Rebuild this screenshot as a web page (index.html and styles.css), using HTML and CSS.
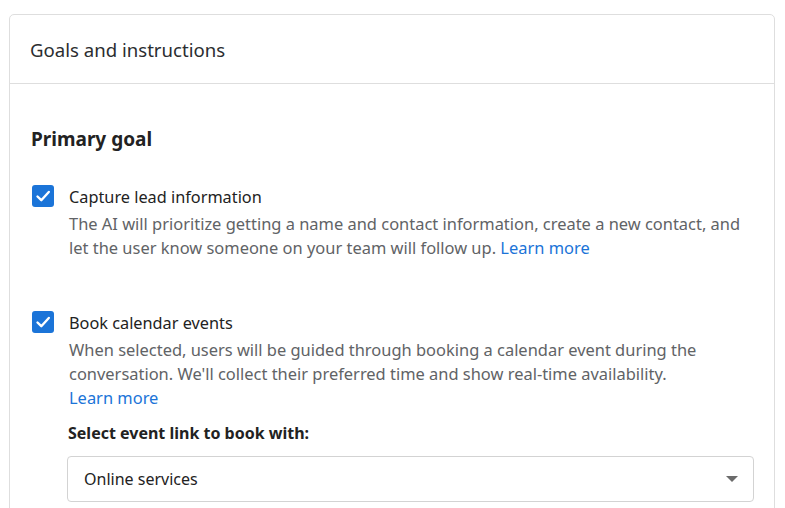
FILE: index.html
```html
<!DOCTYPE html>
<html>
<head>
<meta charset="utf-8">
<link rel="stylesheet" href="styles.css">
</head>
<body>
<div class="card">
  <div class="card-header">Goals and instructions</div>
  <div class="card-body">
    <h2 class="section-title">Primary goal</h2>
    <div class="option">
      <span class="checkbox"><svg viewBox="0 0 22 22" width="22" height="22"><path d="M5.5 11.5 L9.3 15.2 L16.8 7" fill="none" stroke="#fff" stroke-width="2.4" stroke-linecap="round" stroke-linejoin="round"/></svg></span>
      <div class="option-text">
        <div class="option-label">Capture lead information</div>
        <p class="option-desc">The AI will prioritize getting a name and contact information, create a new contact, and let the user know someone on your team will follow up. <a class="link" href="#">Learn more</a></p>
      </div>
    </div>
    <div class="option option-second">
      <span class="checkbox"><svg viewBox="0 0 22 22" width="22" height="22"><path d="M5.5 11.5 L9.3 15.2 L16.8 7" fill="none" stroke="#fff" stroke-width="2.4" stroke-linecap="round" stroke-linejoin="round"/></svg></span>
      <div class="option-text">
        <div class="option-label">Book calendar events</div>
        <p class="option-desc">When selected, users will be guided through booking a calendar event during the conversation. We'll collect their preferred time and show real-time availability.<br><a class="link" href="#">Learn more</a></p>
      </div>
    </div>
    <div class="select-group">
      <div class="select-label">Select event link to book with:</div>
      <div class="select">
        <span class="select-value">Online services</span>
        <span class="caret"></span>
      </div>
    </div>
  </div>
</div>
</body>
</html>
```
FILE: styles.css
```css
html, body {
  margin: 0;
  padding: 0;
  background: #ffffff;
}
body {
  padding: 14px 10px 0 9px;
  font-family: "Noto Sans", "Open Sans", sans-serif;
  color: #2e3033;
  height: 508px;
  box-sizing: border-box;
  overflow: hidden;
}
.card {
  border: 1px solid #dedede;
  border-radius: 5px;
  height: 600px;
  box-sizing: border-box;
}
.card-header {
  height: 68px;
  display: flex;
  align-items: center;
  padding-left: 20px;
  font-size: 18.6px;
  border-bottom: 1px solid #dedede;
  color: #2b2d30;
}
.card-body {
  padding: 43px 20px 0 21px;
}
.section-title {
  margin: 0;
  font-size: 19px;
  line-height: 24px;
  font-weight: 700;
  color: #222;
}
.option {
  display: flex;
  gap: 15px;
  margin-top: 34px;
  padding-left: 1px;
}
.option-second {
  margin-top: 51px;
}
.checkbox {
  flex: none;
  width: 22px;
  height: 22px;
  border-radius: 3px;
  background: #1b74d8;
  display: block;
}
.checkbox svg {
  display: block;
}
.option-text {
  flex: 1;
}
.option-label {
  font-size: 16.3px;
  line-height: 24px;
  color: #222;
}
.option-desc {
  margin: 3px 0 0;
  font-size: 16.45px;
  line-height: 24px;
  color: #616366;
}
.link {
  color: #1b74d8;
  text-decoration: none;
}
.select-group {
  padding-left: 36px;
  margin-top: 11px;
}
.select-label {
  font-size: 16px;
  line-height: 24px;
  font-weight: 700;
  color: #222;
  padding-left: 1px;
}
.select {
  margin-top: 11px;
  height: 46px;
  box-sizing: border-box;
  border: 1px solid #d3d3d3;
  border-radius: 4px;
  display: flex;
  align-items: center;
  justify-content: space-between;
  padding: 0 15px 0 16px;
  width: 687px;
}
.select-value {
  font-size: 16px;
  color: #222;
}
.caret {
  width: 0;
  height: 0;
  border-left: 6px solid transparent;
  border-right: 6px solid transparent;
  border-top: 6px solid #6b6b6b;
}
```
